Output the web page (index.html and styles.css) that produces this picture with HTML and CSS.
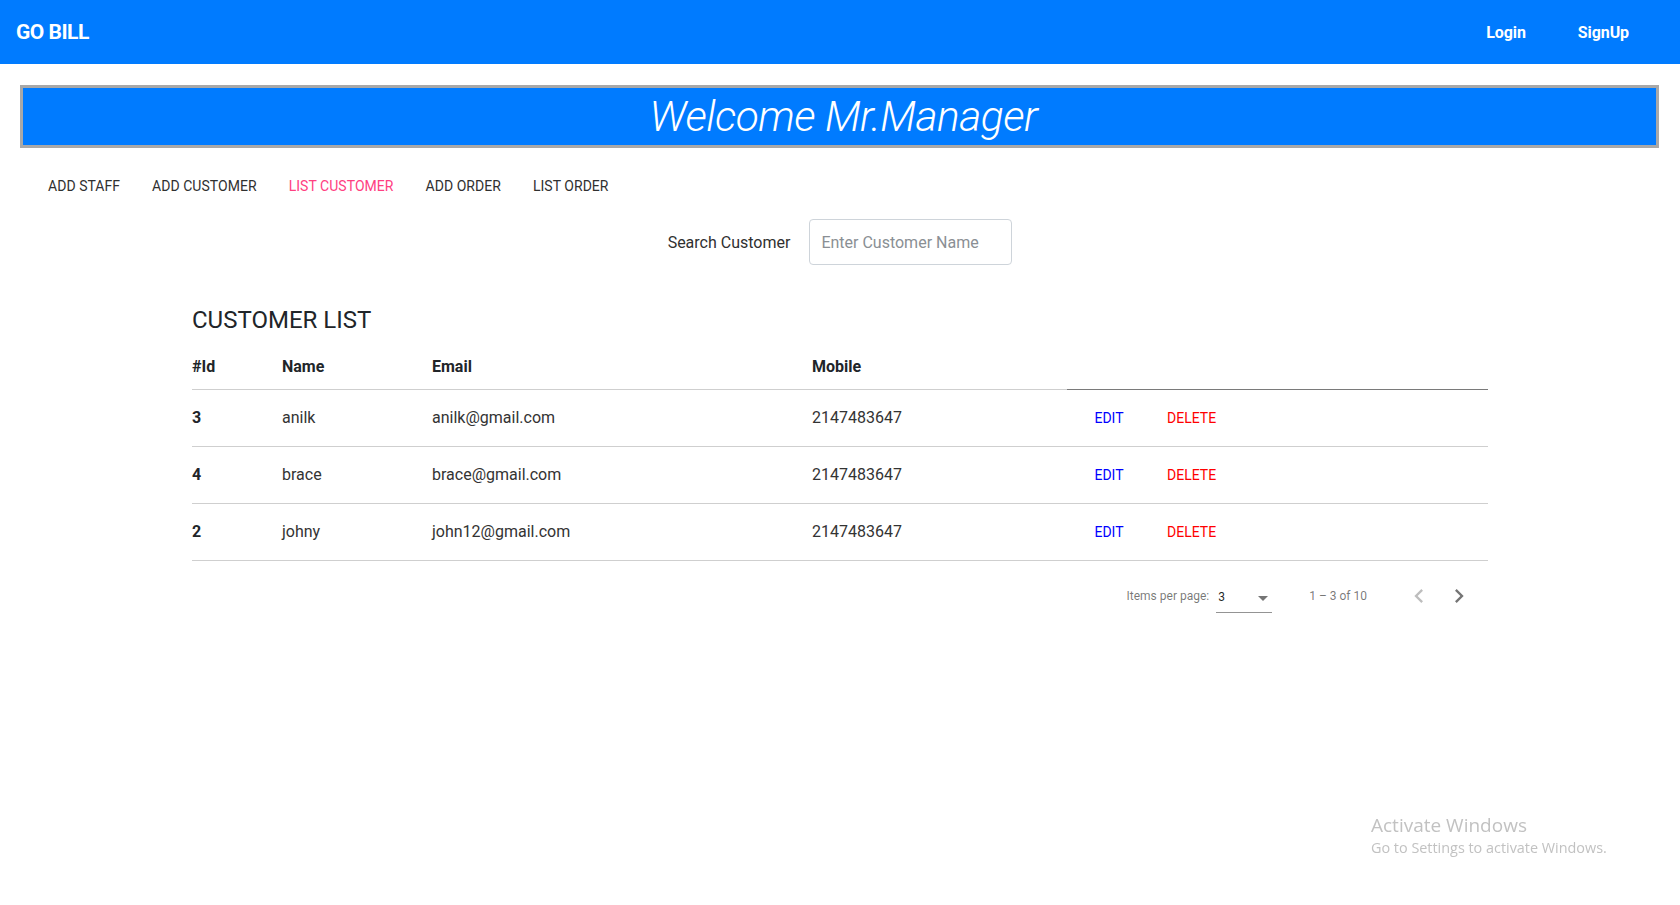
FILE: index.html
```html
<!DOCTYPE html>
<html lang="en">
<head>
<meta charset="utf-8">
<title>GO BILL</title>
<link rel="stylesheet" href="styles.css">
</head>
<body>
<header class="topbar">
  <span class="brand">GO BILL</span>
  <nav class="auth">
    <a class="auth-link" href="#">Login</a>
    <a class="auth-link" href="#">SignUp</a>
  </nav>
</header>

<div class="banner">
  <h1 class="banner-title">Welcome Mr.Manager</h1>
</div>

<nav class="tabs">
  <button class="tab">ADD STAFF</button>
  <button class="tab">ADD CUSTOMER</button>
  <button class="tab tab-active">LIST CUSTOMER</button>
  <button class="tab">ADD ORDER</button>
  <button class="tab">LIST ORDER</button>
</nav>

<div class="search">
  <label class="search-label" for="q">Search Customer</label>
  <input class="search-input" id="q" type="text" placeholder="Enter Customer Name">
</div>

<section class="list">
  <h2 class="list-title">CUSTOMER LIST</h2>
  <table class="grid">
    <colgroup>
      <col class="c-id"><col class="c-name"><col class="c-email"><col class="c-mobile"><col>
    </colgroup>
    <thead>
      <tr>
        <th>#Id</th><th>Name</th><th>Email</th><th>Mobile</th><th class="th-actions"></th>
      </tr>
    </thead>
    <tbody>
      <tr>
        <td class="id">3</td><td>anilk</td><td>anilk@gmail.com</td><td>2147483647</td>
        <td class="actions"><button class="act act-edit">EDIT</button><button class="act act-del">DELETE</button></td>
      </tr>
      <tr>
        <td class="id">4</td><td>brace</td><td>brace@gmail.com</td><td>2147483647</td>
        <td class="actions"><button class="act act-edit">EDIT</button><button class="act act-del">DELETE</button></td>
      </tr>
      <tr>
        <td class="id">2</td><td>johny</td><td>john12@gmail.com</td><td>2147483647</td>
        <td class="actions"><button class="act act-edit">EDIT</button><button class="act act-del">DELETE</button></td>
      </tr>
    </tbody>
  </table>

  <div class="paginator">
    <span class="pg-label">Items per page:</span>
    <div class="pg-select">
      <span class="pg-value">3</span>
      <span class="pg-arrow"></span>
    </div>
    <span class="pg-range">1 – 3 of 10</span>
    <button class="pg-btn pg-disabled" aria-label="Previous page">
      <svg viewBox="0 0 24 24" width="28" height="28"><path d="M15.41 7.41L14 6l-6 6 6 6 1.41-1.41L10.83 12z"/></svg>
    </button>
    <button class="pg-btn" aria-label="Next page">
      <svg viewBox="0 0 24 24" width="28" height="28"><path d="M8.59 16.59L13.17 12 8.59 7.41 10 6l6 6-6 6-1.41-1.41z"/></svg>
    </button>
  </div>
</section>

<div class="watermark">
  <div class="wm-title">Activate Windows</div>
  <div class="wm-sub">Go to Settings to activate Windows.</div>
</div>
</body>
</html>
```

FILE: styles.css
```css
* { box-sizing: border-box; }

body {
  margin: 0;
  font-family: Roboto, "Liberation Sans", sans-serif;
  color: rgba(0, 0, 0, 0.87);
  background: #fff;
}

.topbar {
  height: 64px;
  background: #007bff;
  display: flex;
  align-items: center;
  justify-content: space-between;
  padding: 0 51px 0 16px;
}

.brand {
  color: #fff;
  font-weight: 700;
  font-size: 21px;
  letter-spacing: -0.5px;
}

.auth {
  display: flex;
  gap: 52px;
}

.auth-link {
  color: #fff;
  font-weight: 700;
  font-size: 16px;
  text-decoration: none;
  letter-spacing: -0.1px;
}

.banner {
  margin: 21px 21px 0 20px;
  height: 63px;
  background: #007bff;
  border: 3px solid #a8a8a8;
  display: flex;
  align-items: center;
  justify-content: center;
}

.banner-title {
  margin: 0;
  color: #fff;
  font-size: 42.5px;
  font-weight: 300;
  font-style: italic;
  line-height: 56px;
  letter-spacing: -0.5px;
  padding-left: 8px;
}

.tabs {
  display: flex;
  margin-top: 20px;
  padding-left: 32px;
}

.tab {
  height: 36px;
  padding: 0 16px;
  border: 0;
  background: transparent;
  font-family: Roboto, "Liberation Sans", sans-serif;
  font-size: 14px;
  font-weight: 400;
  letter-spacing: 0.04px;
  color: #303030;
  cursor: pointer;
}

.tab-active { color: #ff4081; }

.search {
  display: flex;
  justify-content: center;
  align-items: center;
  gap: 19px;
  margin-top: 15px;
}

.search-label {
  font-size: 16px;
  color: #303030;
}

.search-input {
  width: 203px;
  height: 46px;
  border: 1px solid #ced4da;
  border-radius: 4px;
  padding: 0 11px;
  font-family: Roboto, "Liberation Sans", sans-serif;
  font-size: 16px;
  color: #495057;
}

.search-input::placeholder { color: #8a8f94; }

.list {
  width: 1296px;
  margin: 41px auto 0;
}

.list-title {
  margin: 0 0 10px;
  font-size: 24px;
  line-height: 28px;
  font-weight: 400;
  color: #212529;
}

.grid {
  width: 100%;
  border-collapse: collapse;
  table-layout: fixed;
}

.c-id { width: 90px; }
.c-name { width: 150px; }
.c-email { width: 380px; }
.c-mobile { width: 255px; }

.grid th {
  height: 45px;
  padding: 0;
  text-align: left;
  font-size: 16px;
  font-weight: 700;
  color: #212529;
  border-bottom: 1px solid #cfcfcf;
  vertical-align: middle;
}

.grid th.th-actions { border-bottom-color: #7a7a7a; }

.grid td {
  height: 57px;
  padding: 0;
  font-size: 16px;
  color: #333;
  border-bottom: 1px solid #cfcfcf;
  vertical-align: middle;
}

.grid td.id {
  font-weight: 700;
  color: #212529;
}

.actions { padding-left: 10px !important; }

.act {
  min-width: 64px;
  height: 36px;
  padding: 0 16px;
  margin-right: 10px;
  border: 0;
  background: transparent;
  font-family: Roboto, "Liberation Sans", sans-serif;
  font-size: 14px;
  font-weight: 400;
  cursor: pointer;
}

.act-edit { color: #0000ff; }
.act-del { color: #ff0000; }

.paginator {
  height: 70px;
  display: flex;
  justify-content: flex-end;
  align-items: center;
  padding-right: 9px;
  font-size: 12px;
  color: rgba(0, 0, 0, 0.54);
}

.pg-label { margin-right: 7px; }

.pg-select {
  width: 56px;
  height: 24px;
  display: flex;
  align-items: center;
  justify-content: space-between;
  border-bottom: 1px solid rgba(0, 0, 0, 0.42);
  margin-top: 10px;
  padding: 0 4px 4px 2px;
}

.pg-value {
  color: rgba(0, 0, 0, 0.87);
  line-height: 14px;
  margin-top: -2px;
}

.pg-arrow {
  width: 0;
  height: 0;
  border-left: 5px solid transparent;
  border-right: 5px solid transparent;
  border-top: 5px solid rgba(0, 0, 0, 0.54);
}

.pg-range {
  margin: 0 32px 0 37px;
}

.pg-btn {
  width: 40px;
  height: 40px;
  padding: 0;
  border: 0;
  background: transparent;
  display: flex;
  align-items: center;
  justify-content: center;
  fill: rgba(0, 0, 0, 0.54);
  cursor: pointer;
}

.pg-disabled { fill: rgba(0, 0, 0, 0.26); }

.watermark {
  position: fixed;
  left: 1371px;
  top: 813px;
  font-family: "Open Sans", "Noto Sans", sans-serif;
  color: #c2c2c2;
  pointer-events: none;
}

.wm-title {
  font-size: 19px;
  line-height: 25px;
}

.wm-sub {
  font-size: 14.4px;
  line-height: 20px;
}
```
